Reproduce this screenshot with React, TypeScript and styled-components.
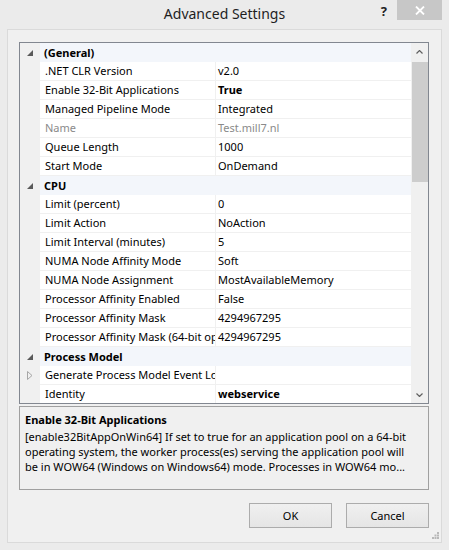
import React from "react";
import styled, { createGlobalStyle } from "styled-components";

const GlobalStyle = createGlobalStyle`
  html, body {
    margin: 0;
    padding: 0;
    background: #ebebeb;
  }
  body {
    font-family: "Noto Sans", "Open Sans", sans-serif;
    font-size: 11px;
    color: #000;
  }
  * { box-sizing: border-box; }
`;

const Window = styled.div`
  width: 449px;
  height: 550px;
  display: flex;
  flex-direction: column;
  background: #ebebeb;
  overflow: hidden;
`;

const TitleBar = styled.div`
  height: 29px;
  flex: none;
  display: grid;
  grid-template-columns: 1fr auto 1fr;
  align-items: start;
`;

const Title = styled.div`
  font-size: 14px;
  padding-top: 4px;
  color: #1e1e1e;
`;

const TitleControls = styled.div`
  display: flex;
  justify-content: flex-end;
  align-items: flex-start;
  padding-right: 7px;
`;

const HelpMark = styled.span`
  font-weight: bold;
  font-size: 13px;
  line-height: 1;
  margin: 5px 10px 0 0;
  color: #222;
`;

const CloseButton = styled.div`
  width: 45px;
  height: 20px;
  background: #c7c7c7;
  display: flex;
  align-items: center;
  justify-content: center;
`;

const Panel = styled.div`
  position: relative;
  margin: 0 7px;
  height: 514px;
  flex: none;
  border: 1px solid #dadada;
  background: #f0f0f0;
  padding: 12px 12px 0 11px;
`;

const Grid = styled.div`
  width: 410px;
  height: 362px;
  border: 1px solid #828790;
  background: #fff;
  display: flex;
  overflow: hidden;
`;

const Rows = styled.div`
  flex: 1;
  display: flex;
  flex-direction: column;
`;

const Row = styled.div`
  height: 19px;
  flex: none;
  display: grid;
  grid-template-columns: 20px 175px 1fr;
  line-height: 18px;
`;

const Margin = styled.div`
  background: #f0f0f0;
  display: flex;
  align-items: center;
  justify-content: center;
`;

const NameCell = styled.div<{ $disabled?: boolean }>`
  padding-left: 5px;
  white-space: nowrap;
  overflow: hidden;
  border-bottom: 1px solid #f0f0f0;
  color: ${(p) => (p.$disabled ? "#8a8a8a" : "#000")};
`;

const ValueCell = styled.div<{ $bold?: boolean; $disabled?: boolean }>`
  padding-left: 2px;
  white-space: nowrap;
  overflow: hidden;
  border-left: 1px solid #f0f0f0;
  border-bottom: 1px solid #f0f0f0;
  font-weight: ${(p) => (p.$bold ? 700 : 400)};
  color: ${(p) => (p.$disabled ? "#8a8a8a" : "#000")};
`;

const CategoryRow = styled.div`
  height: 19px;
  flex: none;
  display: grid;
  grid-template-columns: 20px 1fr;
  line-height: 19px;
`;

const CategoryLabel = styled.div`
  background: #f3f6fb;
  padding-left: 4px;
  font-weight: 700;
`;

const Scrollbar = styled.div`
  width: 17px;
  flex: none;
  background: #f0f0f0;
  display: flex;
  flex-direction: column;
`;

const ScrollArrow = styled.div`
  height: 17px;
  flex: none;
  display: flex;
  align-items: center;
  justify-content: center;
`;

const ScrollTrack = styled.div`
  flex: 1;
  padding: 2px 0 0 1px;
`;

const Thumb = styled.div`
  height: 120px;
  background: #cdcdcd;
`;

const Description = styled.div`
  margin-top: 2px;
  width: 410px;
  height: 84px;
  border: 1px solid #a0a0a0;
  padding: 3px 5px;
`;

const DescTitle = styled.div`
  font-weight: 700;
  line-height: 19px;
`;

const DescLine = styled.div`
  line-height: 15px;
  white-space: nowrap;
  overflow: hidden;
`;

const ButtonRow = styled.div`
  margin-top: 13px;
  width: 410px;
  display: flex;
  justify-content: flex-end;
  gap: 14px;
`;

const Button = styled.button`
  width: 83px;
  height: 25px;
  border: 1px solid #acacac;
  background: linear-gradient(#f0f0f0, #e5e5e5);
  font-family: inherit;
  font-size: 11px;
  color: #000;
  padding: 0;
`;

const Grip = styled.svg`
  position: absolute;
  right: 2px;
  bottom: 3px;
`;

type Prop = { name: string; value: string; bold?: boolean; disabled?: boolean; expandable?: boolean };
type Category = { title: string; props: Prop[] };

const categories: Category[] = [
  {
    title: "(General)",
    props: [
      { name: ".NET CLR Version", value: "v2.0" },
      { name: "Enable 32-Bit Applications", value: "True", bold: true },
      { name: "Managed Pipeline Mode", value: "Integrated" },
      { name: "Name", value: "Test.mill7.nl", disabled: true },
      { name: "Queue Length", value: "1000" },
      { name: "Start Mode", value: "OnDemand" },
    ],
  },
  {
    title: "CPU",
    props: [
      { name: "Limit (percent)", value: "0" },
      { name: "Limit Action", value: "NoAction" },
      { name: "Limit Interval (minutes)", value: "5" },
      { name: "NUMA Node Affinity Mode", value: "Soft" },
      { name: "NUMA Node Assignment", value: "MostAvailableMemory" },
      { name: "Processor Affinity Enabled", value: "False" },
      { name: "Processor Affinity Mask", value: "4294967295" },
      { name: "Processor Affinity Mask (64-bit option)", value: "4294967295" },
    ],
  },
  {
    title: "Process Model",
    props: [
      { name: "Generate Process Model Event Log Entry", value: "", expandable: true },
      { name: "Identity", value: "webservice", bold: true },
    ],
  },
];

const CollapseGlyph = () => (
  <svg width="6" height="6" viewBox="0 0 6 6">
    <polygon points="6,0 6,6 0,6" fill="#595959" />
  </svg>
);

const ExpandGlyph = () => (
  <svg width="6" height="9" viewBox="0 0 6 9">
    <polygon points="0.5,0.5 5,4.5 0.5,8.5" fill="none" stroke="#a6a6a6" strokeWidth="1" />
  </svg>
);

const Chevron = ({ up }: { up?: boolean }) => (
  <svg width="7" height="4" viewBox="0 0 7 4">
    <polyline
      points={up ? "0.5,3.5 3.5,0.5 6.5,3.5" : "0.5,0.5 3.5,3.5 6.5,0.5"}
      fill="none"
      stroke="#606060"
      strokeWidth="1.2"
    />
  </svg>
);

const App = () => {
  return (
    <>
      <GlobalStyle />
      <Window>
        <TitleBar>
          <div />
          <Title>Advanced Settings</Title>
          <TitleControls>
            <HelpMark>?</HelpMark>
            <CloseButton>
              <svg width="10" height="9" viewBox="0 0 10 9">
                <path d="M1 0.5 L9 8.5 M9 0.5 L1 8.5" stroke="#fff" strokeWidth="1.8" />
              </svg>
            </CloseButton>
          </TitleControls>
        </TitleBar>
        <Panel>
          <Grid>
            <Rows>
              {categories.map((cat) => (
                <React.Fragment key={cat.title}>
                  <CategoryRow>
                    <Margin>
                      <CollapseGlyph />
                    </Margin>
                    <CategoryLabel>{cat.title}</CategoryLabel>
                  </CategoryRow>
                  {cat.props.map((p) => (
                    <Row key={p.name}>
                      <Margin>{p.expandable && <ExpandGlyph />}</Margin>
                      <NameCell $disabled={p.disabled}>{p.name}</NameCell>
                      <ValueCell $bold={p.bold} $disabled={p.disabled}>
                        {p.value}
                      </ValueCell>
                    </Row>
                  ))}
                </React.Fragment>
              ))}
            </Rows>
            <Scrollbar>
              <ScrollArrow>
                <Chevron up />
              </ScrollArrow>
              <ScrollTrack>
                <Thumb />
              </ScrollTrack>
              <ScrollArrow>
                <Chevron />
              </ScrollArrow>
            </Scrollbar>
          </Grid>
          <Description>
            <DescTitle>Enable 32-Bit Applications</DescTitle>
            <DescLine>[enable32BitAppOnWin64] If set to true for an application pool on a 64-bit</DescLine>
            <DescLine>operating system, the worker process(es) serving the application pool will</DescLine>
            <DescLine>be in WOW64 (Windows on Windows64) mode. Processes in WOW64 mo...</DescLine>
          </Description>
          <ButtonRow>
            <Button>OK</Button>
            <Button>Cancel</Button>
          </ButtonRow>
          <Grip width="7" height="7" viewBox="0 0 7 7">
            <rect x="5" y="0" width="2" height="2" fill="#b8b8b8" />
            <rect x="2.5" y="2.5" width="2" height="2" fill="#b8b8b8" />
            <rect x="5" y="2.5" width="2" height="2" fill="#b8b8b8" />
            <rect x="0" y="5" width="2" height="2" fill="#b8b8b8" />
            <rect x="2.5" y="5" width="2" height="2" fill="#b8b8b8" />
            <rect x="5" y="5" width="2" height="2" fill="#b8b8b8" />
          </Grip>
        </Panel>
      </Window>
    </>
  );
};

export default App;
